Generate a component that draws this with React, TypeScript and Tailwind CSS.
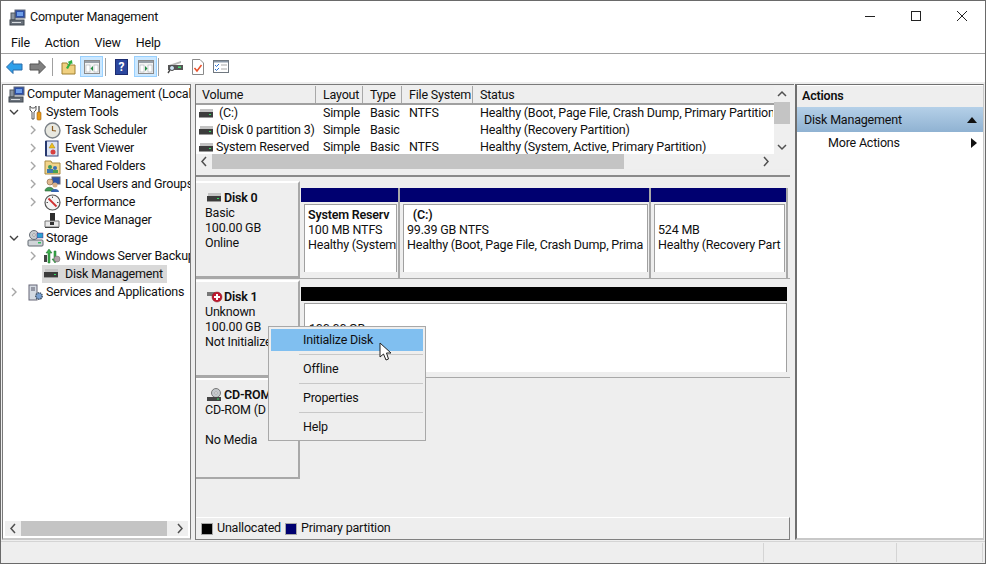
import type { ReactNode } from 'react';

const DiskIcon = ({ x = '' }: { x?: string }) => (
  <svg width="16" height="10" viewBox="0 0 16 10" className={`shrink-0 ${x}`}>
    <rect x="1" y="0" width="13" height="3" fill="#c4c4c4" />
    <rect x="0" y="3" width="14" height="5" fill="#3c3c3c" />
    <rect x="0" y="8" width="14" height="1" fill="#9a9a9a" />
    <rect x="10" y="5" width="2" height="1" fill="#30e060" />
  </svg>
);

const Chevron = ({ open }: { open?: boolean }) => (
  <svg width="10" height="10" viewBox="0 0 10 10" className="shrink-0">
    {open ? (
      <path d="M1 3 L5 7 L9 3" fill="none" stroke="#404040" strokeWidth="1.4" />
    ) : (
      <path d="M3 1 L7 5 L3 9" fill="none" stroke="#a6a6a6" strokeWidth="1.4" />
    )}
  </svg>
);

const PcIcon = () => (
  <svg width="17" height="17" viewBox="0 0 17 17">
    <rect x="6" y="1" width="10" height="8" fill="#2c4fa8" stroke="#606878" />
    <rect x="8" y="3" width="6" height="4" fill="#6f9fe8" />
    <rect x="2" y="4" width="4" height="7" fill="#8a94a0" stroke="#505860" />
    <rect x="1" y="11" width="14" height="5" fill="#68707a" stroke="#404850" />
    <rect x="3" y="13" width="9" height="1" fill="#d8dce0" />
  </svg>
);

const ToolsIcon = () => (
  <svg width="16" height="17" viewBox="0 0 16 17">
    <path d="M3 2 V6 L5 8 V15 H7 V8 L9 6 V2 L7.5 4 H4.5 Z" fill="#fff" stroke="#555" />
    <rect x="11" y="2" width="2" height="6" fill="#888" />
    <rect x="10" y="8" width="4" height="8" rx="1" fill="#e89a18" stroke="#a06010" strokeWidth="0.6" />
  </svg>
);

const ClockIcon = () => (
  <svg width="17" height="17" viewBox="0 0 17 17">
    <circle cx="8.5" cy="8.5" r="7.5" fill="#e8e8e0" stroke="#7c8288" strokeWidth="1.4" />
    <path d="M8.5 4 V8.5 L12 9" fill="none" stroke="#8a5a20" strokeWidth="1.2" />
  </svg>
);

const LogIcon = () => (
  <svg width="16" height="17" viewBox="0 0 16 17">
    <rect x="2" y="1" width="12" height="15" fill="#dde4f4" stroke="#3a4a80" />
    <path d="M2 1 V16" stroke="#26386e" strokeWidth="2" />
    <path d="M8 3 L11 8 H5 Z" fill="#f0c020" stroke="#a08010" strokeWidth="0.5" />
    <circle cx="9" cy="12" r="2.5" fill="#d84040" />
  </svg>
);

const SharedIcon = () => (
  <svg width="17" height="17" viewBox="0 0 17 17">
    <path d="M1 3 H7 L8 5 H16 V16 H1 Z" fill="#f2d48a" stroke="#a98a40" />
    <circle cx="6" cy="9" r="2" fill="#3f9a58" />
    <rect x="3" y="11" width="6" height="4" fill="#3f7ab0" />
    <circle cx="11" cy="10" r="2" fill="#3a70b8" />
    <rect x="9" y="12" width="5" height="3" fill="#48a050" />
  </svg>
);

const UsersIcon = () => (
  <svg width="17" height="17" viewBox="0 0 17 17">
    <rect x="8" y="1" width="8" height="7" fill="#2c55a8" stroke="#667" />
    <circle cx="6" cy="6" r="3" fill="#e0b890" stroke="#806040" strokeWidth="0.6" />
    <path d="M1 15 C1 10 10 10 10 15 Z" fill="#3f9a58" stroke="#306030" strokeWidth="0.6" />
    <circle cx="11" cy="9" r="2.5" fill="#d8b088" />
    <path d="M7 16 C7 12 15 12 15 16 Z" fill="#3464b0" />
  </svg>
);

const PerfIcon = () => (
  <svg width="17" height="17" viewBox="0 0 17 17">
    <circle cx="8.5" cy="8.5" r="7.5" fill="#f4f4f4" stroke="#555" strokeWidth="1.2" />
    <path d="M4.5 4.5 L12.5 12.5" stroke="#d03030" strokeWidth="1.8" />
    <path d="M8.5 2.5 V4 M14.5 8.5 H13 M2.5 8.5 H4" stroke="#555" />
  </svg>
);

const DeviceIcon = () => (
  <svg width="16" height="17" viewBox="0 0 16 17">
    <rect x="6" y="1" width="5" height="8" fill="#2e2e2e" />
    <path d="M1 9 H15 V15 H1 Z" fill="#e8e8e8" stroke="#777" />
    <rect x="6" y="10" width="4" height="3" fill="#333" />
    <rect x="1" y="15" width="14" height="1" fill="#444" />
  </svg>
);

const StorageIcon = () => (
  <svg width="17" height="17" viewBox="0 0 17 17">
    <circle cx="7" cy="5" r="4.5" fill="#c8ccd0" stroke="#6a7078" />
    <circle cx="7" cy="5" r="1.3" fill="#fff" stroke="#666" strokeWidth="0.5" />
    <rect x="10" y="3" width="6" height="5" fill="#2f9fd0" stroke="#506" strokeWidth="0.4" />
    <rect x="1" y="10" width="15" height="6" rx="1" fill="#d0d4d8" stroke="#606870" />
    <rect x="11" y="12" width="3" height="1.5" fill="#30c060" />
  </svg>
);

const BackupIcon = () => (
  <svg width="17" height="17" viewBox="0 0 17 17">
    <path d="M5 1 L8 5 H6 V15 H4 V5 H2 Z" fill="#3cb04c" stroke="#1a6a28" strokeWidth="0.5" />
    <path d="M11 15 L8 11 H10 V3 H12 V11 H14 Z" fill="#3cb04c" stroke="#1a6a28" strokeWidth="0.5" />
    <circle cx="13" cy="11" r="3" fill="#b0a0a8" stroke="#666" strokeWidth="0.5" />
    <rect x="0" y="7" width="3" height="7" fill="#444" />
  </svg>
);

const ServicesIcon = () => (
  <svg width="17" height="17" viewBox="0 0 17 17">
    <rect x="2" y="1" width="8" height="15" fill="#d4dae2" stroke="#667" />
    <path d="M4 4 H8 M4 6 H8" stroke="#556" />
    <circle cx="12" cy="12" r="3.2" fill="#7aa0d0" stroke="#456" strokeWidth="1.5" strokeDasharray="1.4 0.8" />
  </svg>
);

const TreeRow = ({
  level,
  icon,
  label,
  chevron,
  open,
  selected,
}: {
  level: 0 | 1 | 2;
  icon: ReactNode;
  label: string;
  chevron?: boolean;
  open?: boolean;
  selected?: boolean;
}) => (
  <div className="flex items-center h-[18px] whitespace-nowrap">
    {level === 0 && <div className="w-[3px] shrink-0" />}
    {level === 1 && (
      <div className="w-[22px] pl-[6px] shrink-0 flex items-center">{chevron && <Chevron open={open} />}</div>
    )}
    {level === 2 && (
      <div className="w-[39px] pl-[25px] shrink-0 flex items-center">{chevron && <Chevron open={open} />}</div>
    )}
    <div className={`flex items-center h-[18px] pl-[2px] pr-[4px] ${selected ? 'bg-[#d9d9d9]' : ''}`}>
      <div className={`${level === 2 ? 'w-[21px]' : 'w-[19px]'} shrink-0 flex items-center`}>{icon}</div>
      <span>{label}</span>
    </div>
  </div>
);

const ScrollArrow = ({ d }: { d: string }) => (
  <svg width="16" height="15" viewBox="0 0 16 15" className="shrink-0">
    <path d={d} fill="none" stroke="#505050" strokeWidth="1.5" />
  </svg>
);

const Th = ({ w, label }: { w: string; label: string }) => (
  <div className={`${w} shrink-0 h-full pl-[6px] pt-px flex items-center border-r border-[#a8a8a8] mr-px`}>{label}</div>
);

const volumes = [
  ['\u00a0(C:)', 'NTFS', 'Healthy (Boot, Page File, Crash Dump, Primary Partition'],
  ['(Disk 0 partition 3)', '', 'Healthy (Recovery Partition)'],
  ['System Reserved', 'NTFS', 'Healthy (System, Active, Primary Partition)'],
];

const VolumeRow = ({ v }: { v: string[] }) => (
  <div className="flex h-[17px] items-center whitespace-nowrap">
    <div className="w-[121px] shrink-0 pl-[3px] flex items-center gap-[1px] overflow-hidden">
      <DiskIcon />
      <span>{v[0]}</span>
    </div>
    <div className="w-[47px] shrink-0 pl-[6px]">Simple</div>
    <div className="w-[39px] shrink-0 pl-[6px]">Basic</div>
    <div className="w-[71px] shrink-0 pl-[6px]">{v[1]}</div>
    <div className="w-[299px] shrink-0 pl-[6px] overflow-hidden">{v[2]}</div>
  </div>
);

const Partition = ({ w, lines, title }: { w: string; lines: string[]; title?: string }) => (
  <div className={`${w} shrink-0 h-full flex flex-col border-r-2 border-[#a8a8a8]`}>
    <div className="h-[14px] bg-[#000070] shrink-0" />
    <div className="flex-1 pt-[2px] pl-[3px] pr-[1px] pb-[6px]">
      <div className="h-full bg-white border-t border-l border-[#a0a0a0] border-r pl-[3px] pt-[2px] overflow-hidden whitespace-nowrap leading-[15px]">
        <div className="h-[15px] font-semibold">{title}</div>
        {lines.map((l) => (
          <div key={l}>{l}</div>
        ))}
      </div>
    </div>
  </div>
);

const DiskLabel = ({ icon, name, lines, h }: { icon: ReactNode; name: string; lines: string[]; h: string }) => (
  <div
    className={`w-[104px] mr-px shrink-0 ${h} bg-[#eeeeee] border-t-2 border-t-white border-r-2 border-b-2 border-r-[#a8a8a8] border-b-[#a8a8a8] pl-[9px] pt-[7px] leading-[15px] whitespace-nowrap overflow-hidden`}
  >
    <div className="flex items-center gap-[1px] font-semibold h-[15px] pl-[2px]">
      {icon}
      <span>{name}</span>
    </div>
    {lines.map((l, i) => (
      <div key={i} className="h-[15px]">
        {l}
      </div>
    ))}
  </div>
);

const ToolSep = () => <div className="w-px h-[18px] bg-[#a0a0a0] shrink-0" />;

const PaneToggle = ({ dir }: { dir: 'left' | 'right' }) => (
  <div className="w-[23px] h-[21px] bg-[#cce8ff] border border-[#99d1ff] flex items-center justify-center shrink-0">
    <svg width="16" height="14" viewBox="0 0 16 14">
      <rect x="0.5" y="0.5" width="15" height="13" fill="#f4f4f4" stroke="#8a8a8a" />
      <rect x="1" y="1" width="14" height="2" fill="#98a0a8" />
      <rect x="2" y="5" width="4" height="7" fill="#fff" stroke="#98a0a8" strokeWidth="0.5" />
      <rect x="10" y="5" width="4" height="7" fill="#fff" stroke="#98a0a8" strokeWidth="0.5" />
      {dir === 'left' ? <path d="M9 6 V11 L6.5 8.5 Z" fill="#208a40" /> : <path d="M7 6 V11 L9.5 8.5 Z" fill="#208a40" />}
    </svg>
  </div>
);

const MenuItem = ({ label, active }: { label: string; active?: boolean }) => (
  <div className={`h-[22px] flex items-center pl-[32px] ${active ? 'bg-[#80bff0]' : ''}`}>{label}</div>
);

const MenuSep = () => <div className="h-px bg-[#c8c8c8] ml-[28px] my-[3px]" />;

export default function App() {
  return (
    <div className="relative w-[986px] h-[564px] overflow-hidden bg-white text-[12.5px] tracking-[-0.2px] text-[#101010] font-['Roboto',sans-serif] border border-[#6a6a6a] flex flex-col">
      {/* title bar */}
      <div className="h-[32px] shrink-0 flex items-center pl-[8px] bg-white">
        <PcIcon />
        <span className="ml-[4px] text-[#111]">Computer Management</span>
        <div className="ml-auto flex items-center pb-[2px]">
          <div className="w-[46px] flex justify-center">
            <div className="w-[10px] h-px bg-[#222]" />
          </div>
          <div className="w-[46px] flex justify-center">
            <div className="w-[10px] h-[10px] border border-[#222]" />
          </div>
          <div className="w-[46px] flex justify-center">
            <svg width="10" height="10" viewBox="0 0 10 10">
              <path d="M0 0 L10 10 M10 0 L0 10" stroke="#222" strokeWidth="1" />
            </svg>
          </div>
        </div>
      </div>

      {/* menu bar */}
      <div className="h-[21px] shrink-0 flex items-center pl-[10px] gap-[15px] border-b border-[#a0a0a0]">
        <span>File</span>
        <span>Action</span>
        <span>View</span>
        <span>Help</span>
      </div>

      {/* toolbar */}
      <div className="h-[28px] shrink-0 flex items-center pl-[5px] pb-[3px] bg-white">
        <svg width="17" height="14" viewBox="0 0 17 14" className="shrink-0">
          <path d="M0.5 7 L7 0.5 V4 H16 V10 H7 V13.5 Z" fill="#2ea0ea" stroke="#2a6aa8" />
        </svg>
        <svg width="17" height="14" viewBox="0 0 17 14" className="ml-[6px] shrink-0">
          <path d="M16.5 7 L10 0.5 V4 H1 V10 H10 V13.5 Z" fill="#808080" stroke="#555" />
        </svg>
        <div className="ml-[6px]">
          <ToolSep />
        </div>
        <svg width="15" height="16" viewBox="0 0 15 16" className="ml-[8px] shrink-0">
          <path d="M1 4 H6 L7 6 H14 V15 H1 Z" fill="#f0d080" stroke="#a08030" />
          <path d="M5 9 L8 4 L6.5 3 L11 1 L11.5 5 L10 4.5 L7 10 Z" fill="#30b040" />
        </svg>
        <div className="ml-[4px]">
          <PaneToggle dir="left" />
        </div>
        <div className="ml-[2px]">
          <ToolSep />
        </div>
        <div className="ml-[9px] w-[13px] h-[16px] bg-[#2b479e] border border-[#1c2c70] flex items-center justify-center text-white font-bold text-[12px] leading-none shrink-0">
          ?
        </div>
        <div className="ml-[6px]">
          <PaneToggle dir="right" />
        </div>
        <div className="ml-[1px]">
          <ToolSep />
        </div>
        <svg width="16" height="14" viewBox="0 0 16 14" className="ml-[8px] shrink-0">
          <path d="M2 5 L14 1 V3 L2 7 Z" fill="#b8b8b8" />
          <rect x="1" y="5" width="15" height="5" fill="#555" />
          <rect x="11" y="6.5" width="3" height="1.5" fill="#40e070" />
          <circle cx="5" cy="8" r="2.5" fill="#cfe4f4" stroke="#444" />
          <path d="M3 10 L1 13" stroke="#444" strokeWidth="1.4" />
        </svg>
        <svg width="12" height="16" viewBox="0 0 12 16" className="ml-[9px] shrink-0">
          <path d="M0.5 0.5 H8 L11.5 4 V15.5 H0.5 Z" fill="#fff" stroke="#8a8a8a" />
          <path d="M2.5 9 L5 12 L9.5 6" fill="none" stroke="#e8502a" strokeWidth="1.5" />
        </svg>
        <svg width="16" height="13" viewBox="0 0 16 13" className="ml-[9px] shrink-0">
          <rect x="0.5" y="0.5" width="15" height="12" fill="#fff" stroke="#707880" />
          <rect x="1" y="1" width="14" height="1.5" fill="#8a98a8" />
          <path d="M2 5 L3.5 6.5 L6 4 M2 9 L3.5 10.5 L6 8" fill="none" stroke="#2a70d0" />
          <path d="M8 5 H14 M8 9 H14" stroke="#a8a8a8" />
        </svg>
      </div>

      {/* main */}
      <div className="flex-1 min-h-0 flex bg-[#eeeeee] pl-px pt-[2px] pb-[1px]">
        {/* tree */}
        <div className="w-[189px] shrink-0 flex flex-col bg-white border-l border-t border-[#7a7a7a] border-r border-b-2 border-b-[#c8c8c8]">
          <div className="flex-1 min-h-0 overflow-hidden">
            <TreeRow level={0} icon={<PcIcon />} label="Computer Management (Local" />
            <TreeRow level={1} icon={<ToolsIcon />} label="System Tools" chevron open />
            <TreeRow level={2} icon={<ClockIcon />} label="Task Scheduler" chevron />
            <TreeRow level={2} icon={<LogIcon />} label="Event Viewer" chevron />
            <TreeRow level={2} icon={<SharedIcon />} label="Shared Folders" chevron />
            <TreeRow level={2} icon={<UsersIcon />} label="Local Users and Groups" chevron />
            <TreeRow level={2} icon={<PerfIcon />} label="Performance" chevron />
            <TreeRow level={2} icon={<DeviceIcon />} label="Device Manager" />
            <TreeRow level={1} icon={<StorageIcon />} label="Storage" chevron open />
            <TreeRow level={2} icon={<BackupIcon />} label="Windows Server Backup" chevron />
            <TreeRow level={2} icon={<DiskIcon />} label="Disk Management" selected />
            <TreeRow level={1} icon={<ServicesIcon />} label="Services and Applications" chevron />
          </div>
          <div className="h-[15px] mx-[2px] mb-[2px] shrink-0 flex items-center bg-[#efefef]">
            <ScrollArrow d="M10 3 L6 7.5 L10 12" />
            <div className="w-[146px] h-full bg-[#c4c4c4]" />
            <div className="flex-1" />
            <ScrollArrow d="M6 3 L10 7.5 L6 12" />
          </div>
        </div>

        {/* center */}
        <div className="w-[599px] ml-[4px] shrink-0 flex flex-col border-l border-t border-[#7a7a7a]">
          <div className="h-[68px] mt-[1px] shrink-0 flex">
            <div className="w-[578px] shrink-0 flex flex-col">
              <div className="h-[19px] shrink-0 flex items-center border-b-2 border-[#a0a0a0] whitespace-nowrap">
                <Th w="w-[120px]" label="Volume" />
                <Th w="w-[46px]" label="Layout" />
                <Th w="w-[38px]" label="Type" />
                <Th w="w-[70px]" label="File System" />
                <div className="pl-[6px] pt-px">Status</div>
              </div>
              <div className="h-[49px] shrink-0 bg-white overflow-hidden">
                {volumes.map((v) => (
                  <VolumeRow key={v[0]} v={v} />
                ))}
              </div>
            </div>
            <div className="w-[16px] shrink-0 flex flex-col items-center bg-[#efefef] pt-px">
              <ScrollArrow d="M4 9 L8 5 L12 9" />
              <div className="w-full h-[22px] bg-[#c4c4c4]" />
              <div className="flex-1" />
              <ScrollArrow d="M4 6 L8 10 L12 6" />
            </div>
          </div>
          <div className="h-[15px] shrink-0 mr-[4px] flex items-center bg-[#efefef]">
            <ScrollArrow d="M10 3 L6 7.5 L10 12" />
            <div className="w-[412px] h-full bg-[#c4c4c4]" />
            <div className="flex-1" />
            <ScrollArrow d="M6 3 L10 7.5 L6 12" />
            <div className="w-[16px]" />
          </div>
          <div className="h-[8px] mr-[4px] shrink-0 border-b-2 border-[#8a8a8a]" />

          {/* disks */}
          <div className="h-[340px] shrink-0 overflow-hidden mr-[4px]">
            <div className="flex h-[98px] mt-[4px] border-b border-[#a8a8a8]">
              <DiskLabel h="h-full" icon={<DiskIcon />} name="Disk 0" lines={['Basic', '100.00 GB', 'Online']} />
              <div className="flex-1 flex pt-[7px] mr-[3px]">
                <Partition w="w-[99px]" title="System Reserv" lines={['100 MB NTFS', 'Healthy (System']} />
                <Partition w="w-[251px]" title={'\u00a0\u00a0(C:)'} lines={['99.39 GB NTFS', 'Healthy (Boot, Page File, Crash Dump, Prima']} />
                <Partition w="w-[137px]" lines={['524 MB', 'Healthy (Recovery Part']} />
              </div>
            </div>
            <div className="flex h-[98px] mt-[1px] border-b border-[#a8a8a8]">
              <DiskLabel
                h="h-full"
                icon={
                  <svg width="16" height="12" viewBox="0 0 16 12" className="shrink-0">
                    <rect x="0" y="1" width="8" height="4" fill="#777" />
                    <circle cx="10" cy="6" r="5" fill="#c01830" stroke="#802020" strokeWidth="0.5" />
                    <path d="M7 6 H13 M10 3 V9" stroke="#fff" strokeWidth="2" />
                  </svg>
                }
                name="Disk 1"
                lines={['Unknown', '100.00 GB', 'Not Initialize']}
              />
              <div className="flex-1 flex flex-col pt-[7px] pb-[5px] mr-[3px]">
                <div className="h-[14px] bg-black shrink-0" />
                <div className="flex-1 pt-[2px] pl-[3px]">
                  <div className="h-full bg-white border-t border-l border-r border-[#a0a0a0] pl-[4px] pt-[16px]">100.00 GB</div>
                </div>
              </div>
            </div>
            <div className="flex h-[101px]">
              <DiskLabel
                h="h-full"
                icon={
                  <svg width="16" height="14" viewBox="0 0 16 14" className="shrink-0">
                    <circle cx="9" cy="5" r="4.5" fill="#c4c8cc" stroke="#777" />
                    <circle cx="9" cy="5" r="1.2" fill="#fff" stroke="#777" strokeWidth="0.5" />
                    <rect x="0" y="9" width="14" height="4" fill="#444" />
                    <rect x="10" y="10.5" width="2" height="1" fill="#30e060" />
                  </svg>
                }
                name="CD-ROM"
                lines={['CD-ROM (D', '', 'No Media']}
              />
            </div>
          </div>

          {/* legend */}
          <div className="flex-1 min-h-0 flex items-center pl-[5px] border-t border-white border-b border-b-[#808080] border-r border-r-[#808080] mr-[4px]">
            <div className="w-[12px] h-[12px] bg-black border border-[#a8a8a8] mr-[4px]" />
            <span className="w-[68px]">Unallocated</span>
            <div className="w-[12px] h-[12px] bg-[#000070] border border-[#a8a8a8] mr-[4px]" />
            <span>Primary partition</span>
          </div>
        </div>

        {/* actions */}
        <div className="flex-1 ml-[1px] mr-px flex flex-col bg-white border-l-2 border-t border-[#6f6f6f] border-b-2 border-b-[#c8c8c8] border-r border-r-[#c8c8c8]">
          <div className="h-[21px] mt-[1px] shrink-0 bg-[#eeeeee] flex items-center pl-[5px] font-semibold">Actions</div>
          <div className="h-[25px] pt-px shrink-0 bg-gradient-to-b from-[#b5d0e8] to-[#8fb2d2] flex items-center pl-[7px] pr-[4px]">
            <span>Disk Management</span>
            <svg width="10" height="6" viewBox="0 0 10 6" className="ml-auto mr-[2px]">
              <path d="M0 6 L5 0 L10 6 Z" fill="#111" />
            </svg>
          </div>
          <div className="h-[22px] shrink-0 flex items-center pl-[31px] pr-[6px]">
            <span>More Actions</span>
            <svg width="6" height="10" viewBox="0 0 6 10" className="ml-auto">
              <path d="M0 0 L6 5 L0 10 Z" fill="#111" />
            </svg>
          </div>
        </div>
      </div>

      {/* status bar */}
      <div className="h-[22px] shrink-0 flex bg-[#eeeeee] border-t border-[#d4d4d4]">
        <div className="w-[763px] border-r border-[#d4d4d4] my-[1px]" />
        <div className="w-[133px] border-r border-[#d4d4d4] my-[1px]" />
        <div className="w-[86px] border-r border-[#d4d4d4] my-[1px]" />
      </div>

      {/* context menu */}
      <div className="absolute left-[267px] top-[325px] w-[158px] h-[115px] bg-[#eeeeee] border border-[#a8a8a8] p-[2px]">
        <MenuItem label="Initialize Disk" active />
        <MenuSep />
        <MenuItem label="Offline" />
        <MenuSep />
        <MenuItem label="Properties" />
        <MenuSep />
        <MenuItem label="Help" />
      </div>

      {/* mouse pointer */}
      <svg width="14" height="20" viewBox="0 0 14 20" className="absolute left-[378px] top-[341px]">
        <path d="M1 1 V15 L4.5 12 L7 18 L9.5 17 L7.5 11 H12 Z" fill="#fff" stroke="#222" strokeWidth="1" />
      </svg>
    </div>
  );
}
